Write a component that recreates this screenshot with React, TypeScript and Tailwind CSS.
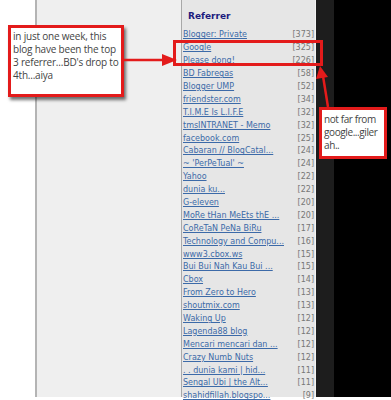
const rows: [string, number][] = [
  ["Blogger: Private", 373],
  ["Google", 325],
  ["Please dong!", 226],
  ["BD Fabregas", 58],
  ["Blogger UMP", 52],
  ["friendster.com", 34],
  ["T.I.M.E Is L.I.F.E", 32],
  ["tmsINTRANET - Memo", 32],
  ["facebook.com", 25],
  ["Cabaran // BlogCatal...", 24],
  ["~ 'PerPeTual' ~", 24],
  ["Yahoo", 22],
  ["dunia ku...", 22],
  ["G-eleven", 20],
  ["MoRe tHan MeEts thE ...", 20],
  ["CoReTaN PeNa BiRu", 17],
  ["Technology and Compu...", 16],
  ["www3.cbox.ws", 15],
  ["Bui Bui Nah Kau Bui ...", 15],
  ["Cbox", 14],
  ["From Zero to Hero", 13],
  ["shoutmix.com", 13],
  ["Waking Up", 12],
  ["Lagenda88 blog", 12],
  ["Mencari mencari dan ...", 12],
  ["Crazy Numb Nuts", 12],
  [". . dunia kami | hid...", 11],
  ["Sengal Ubi | the Alt...", 11],
  ["shahidfillah.blogspo...", 9],
];

export default function App() {
  return (
    <div className="relative w-[391px] h-[400px] overflow-hidden bg-white">
      <div className="flex h-[397px]">
        <div className="w-[35px] bg-white" />
        <div className="w-[146px] bg-[#efefef] border-l-2 border-[#b4b4b4]" />
        <div className="w-[135px] bg-[#e6e6e6] border-l border-[#a8a8a8] border-r border-r-[#f2f2f2] pl-[1px]">
          <div className="pt-[9px] pl-[5px] h-[29px] font-['DejaVu_Sans',sans-serif] font-bold text-[9px] text-[#1c1c7e] leading-[14px]">
            Referrer
          </div>
          <ul className="font-['DejaVu_Sans',sans-serif] text-[8px]">
            {rows.map(([name, count]) => (
              <li key={name} className="flex justify-between items-center h-[12.9px] pr-[1px]">
                <a className="text-[#3c6aa8] underline underline-offset-1 whitespace-nowrap">{name}</a>
                <span className="text-[#777]">[{count}]</span>
              </li>
            ))}
          </ul>
        </div>
        <div className="w-[18px] bg-[#1d1d1d]" />
        <div className="flex-1 bg-black" />
      </div>

      <div className="absolute left-[8px] top-[25px] w-[116px] h-[72px] bg-white border-[3px] border-[#e31b1b] shadow-[2px_3px_3px_rgba(0,0,0,0.55)] pl-[2px] pt-[2px] font-['Open_Sans',sans-serif] text-[10px] tracking-[-0.2px] leading-[13px] text-[#444] whitespace-nowrap">
        in just one week, this
        <br />
        blog have been the top
        <br />
        3 referrer...BD's drop to
        <br />
        4th...aiya
      </div>

      <div className="absolute left-[173px] top-[40px] w-[150px] h-[26px] border-[3px] border-[#e31b1b]" />

      <div className="absolute left-[319px] top-[107px] w-[68px] h-[52px] bg-white border-[3px] border-[#e31b1b] pl-[2px] pt-[3px] font-['Open_Sans',sans-serif] text-[10px] tracking-[-0.4px] leading-[13px] text-[#444] whitespace-nowrap overflow-hidden">
        not far from
        <br />
        google...giler
        <br />
        ah..
      </div>

      <svg className="absolute inset-0 pointer-events-none" width="391" height="400">
        <line x1="123" y1="60" x2="166" y2="60" stroke="#e31b1b" strokeWidth="2.5" />
        <polygon points="162,54 177,60 162,66" fill="#e31b1b" />
        <line x1="328" y1="107" x2="323" y2="76" stroke="#e31b1b" strokeWidth="2.5" />
        <polygon points="320,66 316,79 328,77" fill="#e31b1b" />
      </svg>
    </div>
  );
}
